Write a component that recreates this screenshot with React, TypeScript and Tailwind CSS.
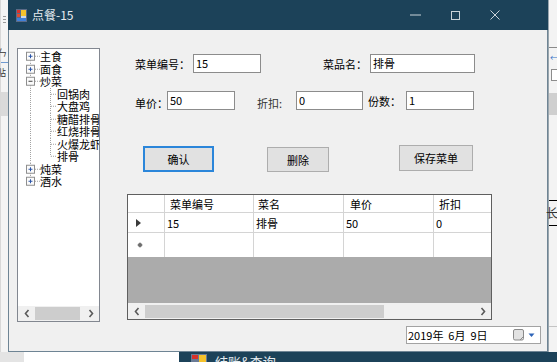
import React from "react";

type Kind = "first" | "mid" | "open" | "last" | "child" | "childLast";

const treeRows: { label: string; kind: Kind }[] = [
  { label: "主食", kind: "first" },
  { label: "面食", kind: "mid" },
  { label: "炒菜", kind: "open" },
  { label: "回锅肉", kind: "child" },
  { label: "大盘鸡", kind: "child" },
  { label: "糖醋排骨", kind: "child" },
  { label: "红烧排骨", kind: "child" },
  { label: "火爆龙虾", kind: "child" },
  { label: "排骨", kind: "childLast" },
  { label: "炖菜", kind: "mid" },
  { label: "酒水", kind: "last" },
];

const H = 12.5;
const CY = H / 2;

// dotted connector lines + expand box for one tree row
function TreeLines({ kind }: { kind: Kind }) {
  const isChild = kind === "child" || kind === "childLast";
  const w = isChild ? 39 : 22;
  const dot = { stroke: "#a3a3a3", strokeWidth: 1, strokeDasharray: "1 1" };
  return (
    <svg width={w} height={H} viewBox={`0 0 ${w} ${H}`} className="shrink-0">
      {kind !== "first" && <line x1="12.5" y1="0" x2="12.5" y2={isChild ? H : CY - 4} {...dot} />}
      {kind !== "last" && !isChild && <line x1="12.5" y1={CY + 4} x2="12.5" y2={H} {...dot} />}
      {!isChild && (
        <>
          <rect x="8.5" y={CY - 4} width="8" height="8" fill="#fbfbfb" stroke="#8e8e8e" />
          <line x1="10.5" y1={CY} x2="14.5" y2={CY} stroke={kind === "open" ? "#404040" : "#2c56a8"} />
          {kind !== "open" && <line x1="12.5" y1={CY - 2} x2="12.5" y2={CY + 2} stroke="#2c56a8" />}
          <line x1="17" y1={CY} x2="22" y2={CY} {...dot} />
        </>
      )}
      {isChild && (
        <>
          <line x1="32.5" y1="0" x2="32.5" y2={kind === "child" ? H : CY} {...dot} />
          <line x1="33" y1={CY} x2="39" y2={CY} {...dot} />
        </>
      )}
    </svg>
  );
}

function Chevron({ dir }: { dir: "l" | "r" }) {
  return (
    <svg width="6" height="9" viewBox="0 0 6 9">
      <path
        d={dir === "l" ? "M4.5 1 L1.5 4.5 L4.5 8" : "M1.5 1 L4.5 4.5 L1.5 8"}
        fill="none"
        stroke="#5a5a5a"
        strokeWidth="1.6"
      />
    </svg>
  );
}

function TextBox({ value, w }: { value: string; w: string }) {
  return (
    <div className={`${w} h-[19px] shrink-0 bg-white border border-[#8c8c8c] pl-[2px] text-[11px] leading-[16px] text-black`}>
      {value}
    </div>
  );
}

function Label({ text, w, className = "" }: { text: string; w: string; className?: string }) {
  return <div className={`${w} shrink-0 whitespace-nowrap text-[11px] leading-[14px] ${className}`}>{text}</div>;
}

function Cell({ w, children, last }: { w: string; children?: React.ReactNode; last?: boolean }) {
  return (
    <div className={`${w} shrink-0 h-full flex items-center pl-[2px] ${last ? "" : "border-r border-[#d4d4d4]"}`}>
      {children}
    </div>
  );
}

export default function App() {
  return (
    <div className="w-[557px] h-[362px] overflow-hidden flex flex-col bg-[#ececec] font-['Noto_Sans_CJK_SC','Noto_Sans',sans-serif] text-black">
      <div className="flex h-[352px]">
        {/* background window peeking on the left */}
        <div className="w-[8px] shrink-0 flex flex-col bg-[#f4f4f4] border-l border-[#d8d8d8]">
          <div className="h-[16px]" />
          <div className="ml-[2px] w-[3px] h-[1px] bg-[#9a9a9a]" />
          <div className="mt-[2px] ml-[2px] w-[3px] h-[1px] bg-[#9a9a9a]" />
          <div className="mt-[2px] ml-[2px] w-[3px] h-[1px] bg-[#9a9a9a]" />
          <div className="mt-[25px] text-[9px] leading-[9px] -ml-[3px] text-[#333]">ㄣ</div>
          <div className="mt-[5px] h-[1px] bg-[#6f9ad0]" />
          <div className="mt-[5px] text-[9px] leading-[9px] -ml-[4px] text-[#333]">贴</div>
          <div className="mt-[15px] h-[24px] bg-[#dadada]" />
          <div className="flex-1" />
        </div>

        {/* the form window */}
        <div className="w-[540px] shrink-0 flex flex-col">
          <div className="h-[30px] shrink-0 bg-[#1c4259] flex items-center pl-[8px]">
            <svg width="11" height="13" viewBox="0 0 11 13" className="shrink-0">
              <rect x="0" y="0" width="11" height="13" fill="#5b6b86" />
              <rect x="1" y="1" width="3" height="3" fill="#d8322b" />
              <rect x="1" y="5" width="3" height="3" fill="#e04a2f" />
              <rect x="5" y="1" width="5" height="6" fill="#f5c22b" />
              <rect x="1" y="9" width="9" height="3" fill="#3f7fd8" />
              <rect x="5" y="7" width="5" height="2" fill="#c9d6e8" />
            </svg>
            <span className="ml-[5px] text-[12px] leading-[14px] text-[#e6ecf0]">点餐-15</span>
            <div className="flex-1" />
            <div className="w-[40px] h-full flex items-center justify-center">
              <svg width="11" height="2" viewBox="0 0 11 2">
                <line x1="0" y1="1" x2="11" y2="1" stroke="#c9d3d9" strokeWidth="1" />
              </svg>
            </div>
            <div className="w-[40px] h-full flex items-center justify-center">
              <svg width="9" height="9" viewBox="0 0 9 9">
                <rect x="0.5" y="0.5" width="8" height="8" fill="none" stroke="#c9d3d9" />
              </svg>
            </div>
            <div className="w-[40px] h-full flex items-center justify-center">
              <svg width="10" height="10" viewBox="0 0 10 10">
                <path d="M0.5 0.5 L9.5 9.5 M9.5 0.5 L0.5 9.5" stroke="#c9d3d9" strokeWidth="1" />
              </svg>
            </div>
            <div className="w-[33px]" />
          </div>

          <div className="flex-1 flex bg-[#f0f0f0] border-x border-b border-[#6e8494]">
            {/* tree view */}
            <div className="ml-[8px] mt-[18px] w-[83px] h-[274px] shrink-0 flex flex-col bg-white border border-[#828790]">
              <div className="flex-1 overflow-hidden pt-[1px]">
                {treeRows.map((r) => (
                  <div key={r.label} className="h-[12.5px] flex items-center">
                    <TreeLines kind={r.kind} />
                    <span className="whitespace-nowrap text-[11px] leading-[12px]">{r.label}</span>
                  </div>
                ))}
              </div>
              <div className="h-[15px] shrink-0 flex items-center bg-[#f0f0f0]">
                <div className="w-[17px] flex justify-center"><Chevron dir="l" /></div>
                <div className="w-[45px] h-[13px] bg-[#cdcdcd]" />
                <div className="flex-1" />
                <div className="w-[17px] flex justify-center"><Chevron dir="r" /></div>
              </div>
            </div>

            {/* right side of the form */}
            <div className="ml-[27px] flex-1 flex flex-col">
              <div className="mt-[24px] h-[19px] flex items-center">
                <Label text="菜单编号：" w="w-[58px]" className="ml-[8px]" />
                <TextBox value="15" w="w-[68px]" />
                <Label text="菜品名：" w="w-[47px]" className="ml-[62px]" />
                <TextBox value="排骨" w="w-[105px]" />
              </div>

              <div className="mt-[18px] h-[19px] flex items-center">
                <Label text="单价：" w="w-[32px]" className="ml-[8px] mt-[4px]" />
                <TextBox value="50" w="w-[68px]" />
                <Label text="折扣:" w="w-[39px]" className="ml-[22px] mt-[4px] text-[#333]" />
                <TextBox value="0" w="w-[67px]" />
                <Label text="份数：" w="w-[38px]" className="ml-[5px]" />
                <TextBox value="1" w="w-[68px]" />
              </div>

              <div className="mt-[35px] h-[27px] flex items-start">
                <button className="ml-[16px] mt-[1px] w-[71px] h-[26px] bg-[#e1e1e1] border-2 border-[#2b86da] text-[11px] leading-[14px] flex items-center justify-center">
                  确认
                </button>
                <button className="ml-[53px] mt-[2px] w-[62px] h-[25px] bg-[#e1e1e1] border border-[#adadad] text-[11px] leading-[14px] flex items-center justify-center">
                  删除
                </button>
                <button className="ml-[70px] w-[74px] h-[26px] bg-[#e1e1e1] border border-[#adadad] text-[11px] leading-[14px] flex items-center justify-center">
                  保存菜单
                </button>
              </div>

              {/* data grid */}
              <div className="mt-[22px] w-[365px] h-[126px] flex flex-col border border-[#5f5f5f] bg-[#ababab]">
                <div className="h-[18px] shrink-0 flex bg-white border-b border-[#d4d4d4] text-[11px] leading-[14px] overflow-hidden">
                  <Cell w="w-[37px]" />
                  <Cell w="w-[89px]"><span className="pl-[3px]">菜单编号</span></Cell>
                  <Cell w="w-[90px]"><span className="pl-[2px]">菜名</span></Cell>
                  <Cell w="w-[90px]"><span className="pl-[4px]">单价</span></Cell>
                  <Cell w="w-[57px]" last><span className="pl-[3px]">折扣</span></Cell>
                </div>
                <div className="h-[20px] shrink-0 flex bg-white border-b border-[#d4d4d4] text-[11px] leading-[14px] overflow-hidden">
                  <Cell w="w-[37px]">
                    <svg width="5" height="8" viewBox="0 0 5 8" className="ml-[6px]">
                      <path d="M0 0 L5 4 L0 8 Z" fill="#3a3a3a" />
                    </svg>
                  </Cell>
                  <Cell w="w-[89px]">15</Cell>
                  <Cell w="w-[90px]">排骨</Cell>
                  <Cell w="w-[90px]">50</Cell>
                  <Cell w="w-[57px]" last>0</Cell>
                </div>
                <div className="h-[24px] shrink-0 flex bg-white text-[11px] overflow-hidden">
                  <Cell w="w-[37px]">
                    <svg width="6" height="6" viewBox="0 0 6 6" className="ml-[7px]">
                      <circle cx="3" cy="3" r="2" fill="#555" />
                      <path d="M3 0 V6 M0 3 H6" stroke="#888" strokeWidth="0.6" />
                    </svg>
                  </Cell>
                  <Cell w="w-[89px]" />
                  <Cell w="w-[90px]" />
                  <Cell w="w-[90px]" />
                  <Cell w="w-[57px]" last />
                </div>
                <div className="flex-1" />
                <div className="h-[16px] shrink-0 flex items-center bg-[#f0f0f0]">
                  <div className="w-[17px] flex justify-center"><Chevron dir="l" /></div>
                  <div className="w-[239px] h-[13px] bg-[#cdcdcd]" />
                  <div className="flex-1" />
                  <div className="w-[17px] flex justify-center"><Chevron dir="r" /></div>
                </div>
              </div>

              {/* date picker */}
              <div className="mt-[6px] flex justify-end pr-[6px]">
                <div className="w-[135px] h-[18px] flex items-center bg-white border border-[#a3a3a3] text-[11px] leading-[14px]">
                  <span className="pl-[1px] whitespace-pre">2019年  6月  9日</span>
                  <div className="flex-1" />
                  <svg width="12" height="12" viewBox="0 0 12 12">
                    <rect x="0.5" y="0.5" width="10" height="10.5" rx="1.5" fill="#e2e2e2" stroke="#8a8a8a" />
                    <path d="M7 11 L10.5 7.5" stroke="#8a8a8a" />
                  </svg>
                  <svg width="9" height="5" viewBox="0 0 9 5" className="ml-[2px] mr-[4px]">
                    <path d="M1.5 0.5 L7.5 0.5 L4.5 4 Z" fill="#2e64b8" />
                  </svg>
                </div>
              </div>
            </div>
          </div>
        </div>

        {/* background window peeking on the right */}
        <div className="flex-1 flex flex-col bg-[#f3f3f3] border-l border-[#9aa6ae]">
          <div className="h-[47px]" />
          <div className="h-[1px] bg-[#8a8a8a]" />
          <div className="mt-[6px] ml-[1px] text-[8px] leading-[8px] text-[#3a74c8]">←</div>
          <div className="mt-[7px] ml-[2px] w-[10px] h-[12px] border border-[#8c8c8c] bg-white" />
          <div className="mt-[12px] h-[22px] bg-[#cfcfcf]" />
          <div className="h-[85px]" />
          <div className="h-[1px] bg-black" />
          <div className="h-[24px] text-[12px] leading-[24px] -ml-[3px] text-[#333]">长</div>
          <div className="h-[1px] bg-black" />
          <div className="h-[100px]" />
          <div className="h-[1px] bg-[#c4c4c4]" />
          <div className="flex-1" />
        </div>
      </div>

      {/* bottom strip: other windows behind */}
      <div className="h-[10px] flex">
        <div className="w-[24px] bg-[#e4e4e4]" />
        <div className="w-[155px] bg-white" />
        <div className="flex-1 bg-[#1c4259] flex items-start pl-[12px] pt-[2px] overflow-hidden">
          <svg width="16" height="12" viewBox="0 0 16 12" className="shrink-0">
            <rect x="0" y="0" width="16" height="12" fill="#6a7b96" />
            <rect x="8" y="1" width="7" height="7" fill="#f5c22b" />
            <rect x="1" y="1" width="6" height="4" fill="#d8322b" />
          </svg>
          <span className="ml-[8px] text-[13px] leading-[15px] text-[#e6ecf0] whitespace-nowrap">结账&amp;查询</span>
        </div>
      </div>
    </div>
  );
}
